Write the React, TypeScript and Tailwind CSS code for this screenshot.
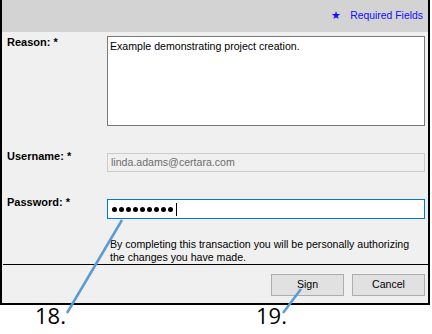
const dots = Array.from({ length: 9 });

export default function App() {
  return (
    <div className="relative w-[432px] h-[334px] bg-white font-['Liberation_Sans',Arial,sans-serif] text-[10.6px] text-black">
      {/* dialog frame */}
      <div className="w-[430px] border-x-2 border-b-2 border-black bg-[#f0f0f0]">
        {/* header strip */}
        <div className="h-[32px] bg-[#d3d3d3] flex items-center justify-end pr-[5px] pb-[1px] gap-[9px] text-[#0f0fff] text-[10.4px]">
          <span className="text-[11px] leading-none">★</span>
          <span>Required Fields</span>
        </div>

        <div className="grid grid-cols-[105px_318px] pt-[4px]">
          <div className="pl-[5px] font-bold text-[11px] leading-[13px]">Reason: *</div>
          <div className="h-[90px] border border-[#7a7a7a] bg-white px-[2px] pt-[2px] leading-[14px]">
            Example demonstrating project creation.
          </div>

          <div className="pl-[5px] font-bold text-[11px] leading-[13px] mt-[24px]">Username: *</div>
          <div className="mt-[27px] h-[19px] border border-[#cccccc] bg-[#f0f0f0] px-[3px] flex items-center text-[#6d6d6d]">
            linda.adams@certara.com
          </div>

          <div className="pl-[5px] font-bold text-[11px] leading-[13px] mt-[24px]">Password: *</div>
          <div className="mt-[27px] h-[20px] border border-[#0078d7] bg-white pl-[4px] flex items-center gap-[2px]">
            {dots.map((_, i) => (
              <div key={i} className="w-[5px] h-[5px] rounded-full bg-black" />
            ))}
            <div className="ml-[1px] w-[1px] h-[13px] bg-black" />
          </div>

          <div />
          <div className="pt-[19px] pl-[3px] leading-[13px] whitespace-nowrap">
            By completing this transaction you will be personally authorizing
            <br />
            the changes you have made.
          </div>
        </div>

        <div className="h-[1px] bg-black ml-[1px]" />

        <div className="flex justify-end gap-[8px] pr-[3px] pt-[9px] pb-[7px]">
          <button className="w-[73px] h-[22px] bg-[#e1e1e1] border border-[#adadad]">Sign</button>
          <button className="w-[73px] h-[22px] bg-[#e1e1e1] border border-[#adadad]">Cancel</button>
        </div>
      </div>

      {/* annotation callouts */}
      <svg className="absolute left-0 top-0 pointer-events-none" width="432" height="334">
        <line x1="67" y1="313" x2="122" y2="220" stroke="#5b9bd5" strokeWidth="2.5" />
        <line x1="283" y1="313" x2="301" y2="289" stroke="#5b9bd5" strokeWidth="2.5" />
      </svg>
      <div className="absolute left-[35px] top-[300px] font-['Open_Sans',sans-serif] text-[22px] leading-[30px]">18.</div>
      <div className="absolute left-[256px] top-[300px] font-['Open_Sans',sans-serif] text-[22px] leading-[30px]">19.</div>
    </div>
  );
}
